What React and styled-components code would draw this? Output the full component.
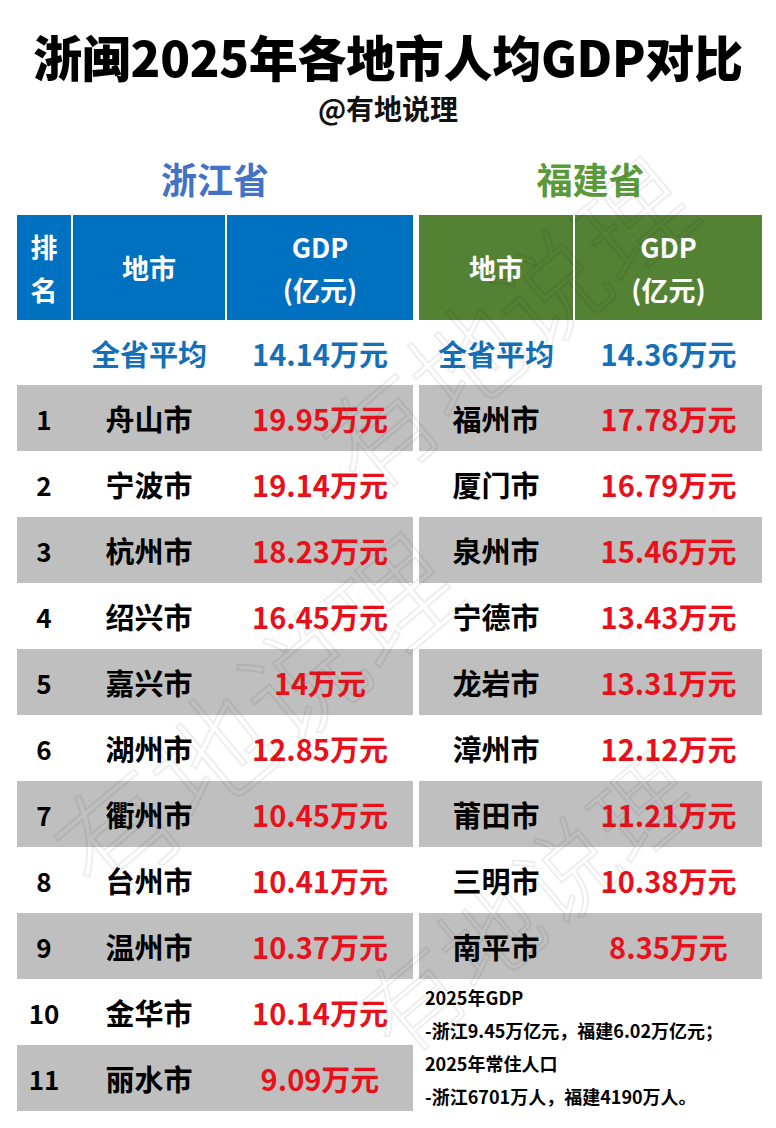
import React from 'react';
import styled, { createGlobalStyle } from 'styled-components';

const GlobalStyle = createGlobalStyle`
  html, body {
    margin: 0;
    padding: 0;
    background: #fff;
  }
  body {
    font-family: "Noto Sans CJK SC", "Noto Sans", sans-serif;
  }
`;

const Page = styled.div`
  position: relative;
  width: 776px;
  height: 1128px;
  overflow: hidden;
  background: #fff;
`;

const Watermark = styled.div`
  position: absolute;
  left: ${props => props.$x}px;
  top: ${props => props.$y}px;
  transform: rotate(${props => props.$r}deg);
  transform-origin: left top;
  font-size: ${props => props.$size}px;
  line-height: 1;
  font-weight: 300;
  white-space: nowrap;
  color: transparent;
  -webkit-text-stroke: 2px rgba(0, 0, 0, 0.07);
  pointer-events: none;
  z-index: 5;
`;

const Top = styled.header`
  padding-top: 28px;
  text-align: center;
`;

const Title = styled.h1`
  margin: 0;
  font-size: 49px;
  line-height: 56px;
  font-weight: 900;
  color: #000;
  letter-spacing: -0.3px;
`;

const Sub = styled.div`
  margin-top: 4px;
  font-size: 28px;
  line-height: 40px;
  font-weight: 700;
  color: #111;
`;

const Tables = styled.div`
  display: flex;
  gap: 6px;
  padding-left: 17px;
`;

const Side = styled.section`
  width: ${props => props.$width}px;
  display: flex;
  flex-direction: column;
`;

const Province = styled.h2`
  margin: 20px 0 7px;
  height: 60px;
  line-height: 60px;
  font-size: 36px;
  font-weight: 700;
  color: ${props => props.$color};
  text-align: center;
`;

const Row = styled.div`
  display: grid;
  grid-template-columns: ${props => props.$cols};
  column-gap: 2px;
  height: ${props => props.$h}px;
  background: ${props => props.$bg || 'transparent'};
`;

const HeadCell = styled.div`
  background: ${props => props.$bg};
  color: #fff;
  font-size: 27px;
  font-weight: 700;
  line-height: 43px;
  display: flex;
  flex-direction: column;
  align-items: center;
  justify-content: center;
  text-align: center;
`;

const Cell = styled.div`
  display: flex;
  align-items: center;
  justify-content: center;
  font-size: ${props => props.$size || 29}px;
  font-weight: 700;
  color: ${props => props.$color || '#000'};
  white-space: nowrap;
`;

const Notes = styled.div`
  height: 132px;
  padding: 2px 0 0 6px;
  font-size: 18px;
  line-height: 33px;
  font-weight: 700;
  color: #000;
  white-space: nowrap;
`;

const BLUE = '#0070c0';
const GREEN = '#548235';
const GRAY = '#bfbfbf';
const RED = '#e8101a';
const AVG = '#1470b8';

const LEFT_COLS = '54px 152px 186px';
const RIGHT_COLS = '154px 187px';

const zhejiang = [
  ['舟山市', '19.95万元'],
  ['宁波市', '19.14万元'],
  ['杭州市', '18.23万元'],
  ['绍兴市', '16.45万元'],
  ['嘉兴市', '14万元'],
  ['湖州市', '12.85万元'],
  ['衢州市', '10.45万元'],
  ['台州市', '10.41万元'],
  ['温州市', '10.37万元'],
  ['金华市', '10.14万元'],
  ['丽水市', '9.09万元'],
];

const fujian = [
  ['福州市', '17.78万元'],
  ['厦门市', '16.79万元'],
  ['泉州市', '15.46万元'],
  ['宁德市', '13.43万元'],
  ['龙岩市', '13.31万元'],
  ['漳州市', '12.12万元'],
  ['莆田市', '11.21万元'],
  ['三明市', '10.38万元'],
  ['南平市', '8.35万元'],
];

export default function App() {
  return (
    <Page>
      <GlobalStyle />
      <Top>
        <Title>浙闽2025年各地市人均GDP对比</Title>
        <Sub>@有地说理</Sub>
      </Top>

      <Tables>
        <Side $width={396}>
          <Province $color="#4472c4">浙江省</Province>
          <Row $cols={LEFT_COLS} $h={105}>
            <HeadCell $bg={BLUE}><span>排</span><span>名</span></HeadCell>
            <HeadCell $bg={BLUE}>地市</HeadCell>
            <HeadCell $bg={BLUE}><span>GDP</span><span>(亿元)</span></HeadCell>
          </Row>
          <Row $cols={LEFT_COLS} $h={65}>
            <Cell />
            <Cell $color={AVG}>全省平均</Cell>
            <Cell $color={AVG}>14.14万元</Cell>
          </Row>
          {zhejiang.map(([city, value], i) => (
            <Row key={city} $cols={LEFT_COLS} $h={66} $bg={i % 2 === 0 ? GRAY : null}>
              <Cell $size={26}>{i + 1}</Cell>
              <Cell>{city}</Cell>
              <Cell $color={RED}>{value}</Cell>
            </Row>
          ))}
        </Side>

        <Side $width={343}>
          <Province $color="#5a9a3a">福建省</Province>
          <Row $cols={RIGHT_COLS} $h={105}>
            <HeadCell $bg={GREEN}>地市</HeadCell>
            <HeadCell $bg={GREEN}><span>GDP</span><span>(亿元)</span></HeadCell>
          </Row>
          <Row $cols={RIGHT_COLS} $h={65}>
            <Cell $color={AVG}>全省平均</Cell>
            <Cell $color={AVG}>14.36万元</Cell>
          </Row>
          {fujian.map(([city, value], i) => (
            <Row key={city} $cols={RIGHT_COLS} $h={66} $bg={i % 2 === 0 ? GRAY : null}>
              <Cell>{city}</Cell>
              <Cell $color={RED}>{value}</Cell>
            </Row>
          ))}
          <Notes>
            <div>2025年GDP</div>
            <div>-浙江9.45万亿元，福建6.02万亿元；</div>
            <div>2025年常住人口</div>
            <div>-浙江6701万人，福建4190万人。</div>
          </Notes>
        </Side>
      </Tables>

      <Watermark $x={30} $y={820} $r={-40} $size={120}>有地说理</Watermark>
      <Watermark $x={340} $y={990} $r={-40} $size={100}>有地说理</Watermark>
      <Watermark $x={300} $y={420} $r={-40} $size={110}>有地说理</Watermark>
    </Page>
  );
}
